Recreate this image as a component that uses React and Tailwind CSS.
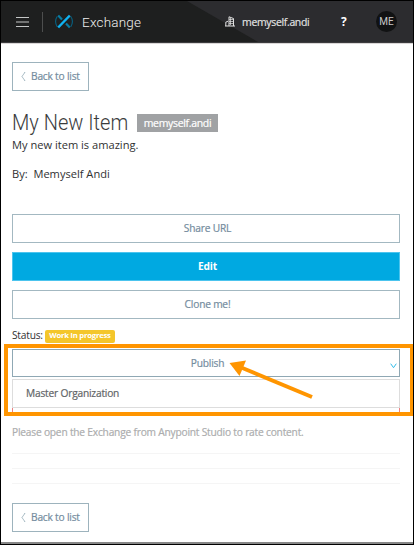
import React from "react";

function BackButton() {
  return (
    <button className="flex h-[29px] w-[77px] items-center border border-[#9db3bd] bg-white pl-[8px] text-[10.2px] leading-none tracking-[-0.2px] text-[#748c9e] [-webkit-text-stroke:0.2px]">
      <svg width="5" height="11" viewBox="0 0 5 11" className="mr-[5px]" fill="none" stroke="#9db3bd" strokeWidth="1">
        <path d="M4 1C3 3 1.5 4.5 1 5.5C1.5 6.5 3 8 4 10" />
      </svg>
      <span className="whitespace-nowrap">Back to list</span>
    </button>
  );
}

function Header() {
  return (
    <header className="relative flex h-[42px] items-center border-b border-[#3c3c3e] bg-[#1e1f1f]">
      <svg className="absolute top-0 left-0" width="412" height="41" viewBox="0 0 412 41">
        <path d="M186 0H412V41H257Z" fill="#2c2c2f" />
      </svg>
      <div className="relative flex w-full items-center">
        <svg className="ml-[15px]" width="13" height="12" viewBox="0 0 13 12">
          <path d="M0 1.5H13M0 6H13M0 10.5H13" stroke="#c4c6c6" strokeWidth="1" />
        </svg>
        <div className="ml-[13px] h-[20px] w-px bg-[#4d4e4e]" />
        <svg className="ml-[12px]" width="18" height="15" viewBox="0 0 18 15" fill="none">
          <path d="M2.2 2.5C0.2 5.5 0.2 9.5 2.2 12.8M15.8 2.5C17.8 5.5 17.8 9.5 15.8 12.8" stroke="#076080" strokeWidth="1.1" />
          <path d="M3.2 1.5L7 5.6M11 9.6L14.8 13.5" stroke="#087ca3" strokeWidth="2.2" />
          <path d="M3.2 13.5L14.8 1.5" stroke="#10b3f3" strokeWidth="2.5" />
        </svg>
        <span className="ml-[9px] w-[60px] whitespace-nowrap font-[Roboto] text-[13.5px] leading-[16px] font-light tracking-[0.2px] text-[#f0f0f0]">Exchange</span>
        <svg className="ml-[83px]" width="10" height="11" viewBox="0 0 10 11" fill="none" stroke="#e0e0e0">
          <path d="M0.8 10V6.2L3 5.2M4 10V0.8L8.5 2.5V10M0 10H10" />
          <path d="M4 3.5H8M4 5.5H8M4 7.5H8M5.5 2V9" strokeWidth="0.7" />
        </svg>
        <span className="ml-[7px] w-[68px] whitespace-nowrap text-[10.5px] leading-[16px] tracking-[-0.34px] text-[#e4e4e4] [-webkit-text-stroke:0.15px]">memyself.andi</span>
        <span className="ml-[31px] w-[8px] text-[12px] leading-[16px] font-bold text-white">?</span>
        <div className="ml-[27px] flex h-[21px] w-[21px] items-center justify-center rounded-full bg-[#111213] font-[Roboto] text-[10px] leading-none text-[#c7c7c7]">ME</div>
      </div>
    </header>
  );
}

export default function App() {
  return (
    <div className="relative h-[545px] w-[414px] overflow-hidden border border-black bg-white font-['Open_Sans',sans-serif]">
      <Header />
      <div className="h-px bg-[#d9d6d6]" />
      <main className="flex flex-col pr-[13px] pl-[11px] pt-[18px]">
        <BackButton />
        <div className="mt-[19px] flex h-[26px] items-center">
          <h1 className="w-[125px] whitespace-nowrap font-[Roboto] text-[22px] leading-[26px] font-light text-[#3b3c3d]">
            <span className="inline-block origin-left scale-x-[0.91]">My New Item</span>
          </h1>
          <span className="flex h-[18px] w-[81px] items-center justify-center bg-[#a0a2a4] text-[10.5px] leading-none tracking-[-0.32px] text-white [-webkit-text-stroke:0.2px]">memyself.andi</span>
        </div>
        <p className="mt-px text-[11.1px] leading-[16px] text-[#303132]">My new item is amazing.</p>
        <p className="mt-[13px] text-[11.1px] leading-[16px] text-[#303132]">By:&nbsp; Memyself Andi</p>
        <div className="mt-[32px] flex flex-col gap-[9px] text-[10.2px] leading-none tracking-[-0.2px]">
          <button className="flex h-[29px] items-center justify-center border border-[#a3b8c1] pl-[3px] text-[#748c9e] [-webkit-text-stroke:0.2px]">Share URL</button>
          <button className="flex h-[29px] items-center justify-center border border-[#4cc4ee] bg-[#00a9e1] pl-[3px] font-bold text-white">Edit</button>
          <button className="flex h-[29px] items-center justify-center border border-[#a3b8c1] pl-[3px] text-[#748c9e] [-webkit-text-stroke:0.2px]">Clone me!</button>
        </div>
        <div className="mt-[9px] flex h-[16px] items-center text-[10.2px] tracking-[-0.22px] text-[#303132]">
          <span className="w-[33px] whitespace-nowrap">Status:</span>
          <span className="flex h-[13px] w-[70px] items-center justify-center rounded-[2px] bg-[#f4c62b] text-[7.7px] font-bold tracking-[-0.22px] whitespace-nowrap text-white">Work in progress</span>
        </div>
        <button className="relative mt-[5px] flex h-[28px] items-center justify-center border border-[#8fa8b4] pl-[3px] text-[10.2px] leading-none tracking-[-0.2px] text-[#748c9e] [-webkit-text-stroke:0.2px]">
          Publish
          <svg className="absolute top-[13px] right-[2px]" width="7" height="6" viewBox="0 0 7 6" fill="none" stroke="#35bde9">
            <path d="M0.7 0.7L3.5 4.7L6.3 0.7" />
          </svg>
        </button>
        <div className="mt-[2px] flex h-[29px] items-center border border-[#dddddd] pl-[13px] text-[10.2px] leading-none tracking-[-0.2px] text-[#626567] [-webkit-text-stroke:0.2px]">Master Organization</div>
        <div className="h-[4px] border-x border-[#ef8080]" />
        <p className="mt-[12px] text-[10.2px] leading-[16px] tracking-[-0.2px] text-[#acadae] [-webkit-text-stroke:0.2px]">Please open the Exchange from Anypoint Studio to rate content.</p>
        <div className="mt-[13px] flex flex-col gap-[14px]">
          <div className="h-px bg-[#f5f5f5]" />
          <div className="h-px bg-[#f5f5f5]" />
          <div className="h-px bg-[#f5f5f5]" />
        </div>
        <div className="mt-[19px]">
          <BackButton />
        </div>
      </main>
      <div className="absolute right-0 bottom-0 left-0 h-[2px] bg-[#888888]" />
      <div className="absolute top-[343px] left-[3px] h-[72px] w-[410px] border-4 border-[#ff9500]" />
      <svg className="absolute top-[358px] left-[227px]" width="86" height="40" viewBox="0 0 86 40">
        <path d="M12 8L84 38" stroke="#ff9500" strokeWidth="4" />
        <path d="M1.5 4L18 1.5L11.5 17Z" fill="#ff9500" />
      </svg>
    </div>
  );
}
